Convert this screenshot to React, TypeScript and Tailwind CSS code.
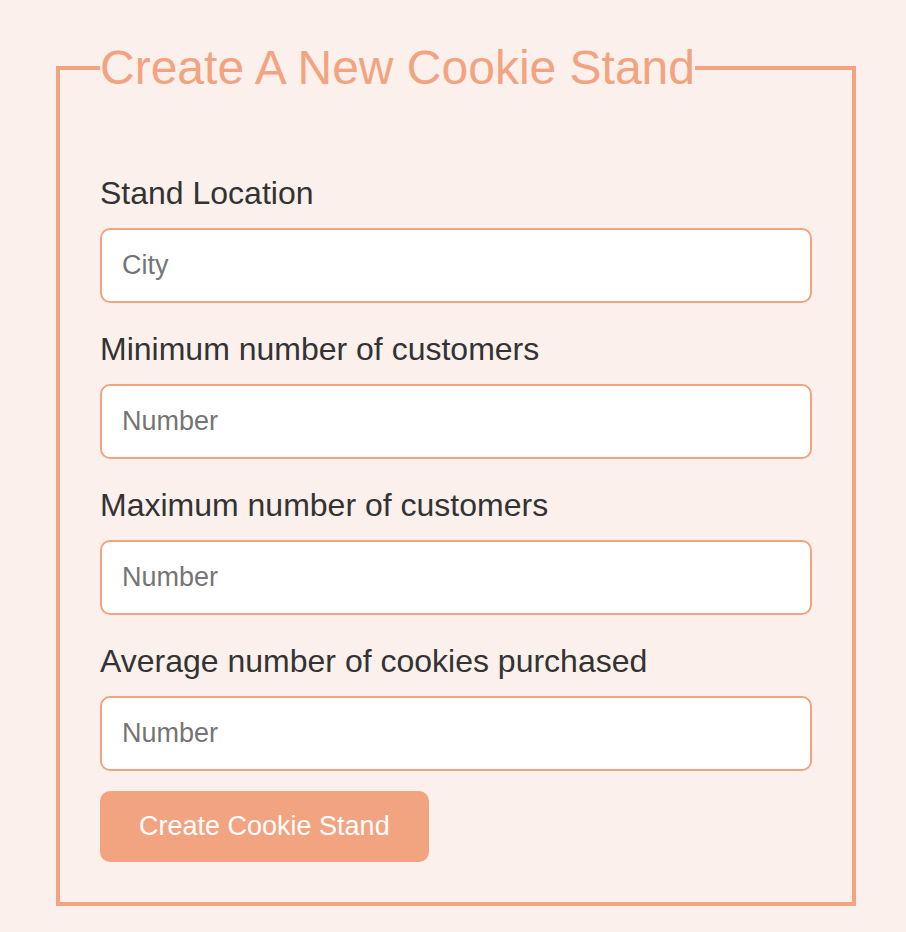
const fields = [
  { id: "location", label: "Stand Location", placeholder: "City" },
  { id: "min", label: "Minimum number of customers", placeholder: "Number" },
  { id: "max", label: "Maximum number of customers", placeholder: "Number" },
  { id: "average", label: "Average number of cookies purchased", placeholder: "Number" },
];

export default function App() {
  return (
    <main className="min-h-screen bg-[#fbf0ec] pt-9 pr-[50px] pb-[26px] pl-14 font-['Liberation_Sans',Arial,sans-serif] text-[#333333]">
      <form>
        <fieldset className="border-4 border-[#f2a481] px-10 pb-10">
          <legend className="text-[48px] leading-[64px] text-[#f2a481]">Create A New Cookie Stand</legend>
          <div className="flex flex-col gap-5 pt-[67px]">
            {fields.map((field) => (
              <div key={field.id} className="flex flex-col gap-2">
                <label htmlFor={field.id} className="text-[32px] leading-[53px]">
                  {field.label}
                </label>
                <input
                  id={field.id}
                  type="text"
                  placeholder={field.placeholder}
                  className="h-[75px] w-full rounded-[10px] border-2 border-[#f2a481] bg-white px-5 text-[27px] outline-none placeholder:text-[#757575]"
                />
              </div>
            ))}
            <button type="button" className="h-[71px] self-start rounded-[10px] bg-[#f2a481] px-[39px] text-[27px] text-white">
              Create Cookie Stand
            </button>
          </div>
        </fieldset>
      </form>
    </main>
  );
}
